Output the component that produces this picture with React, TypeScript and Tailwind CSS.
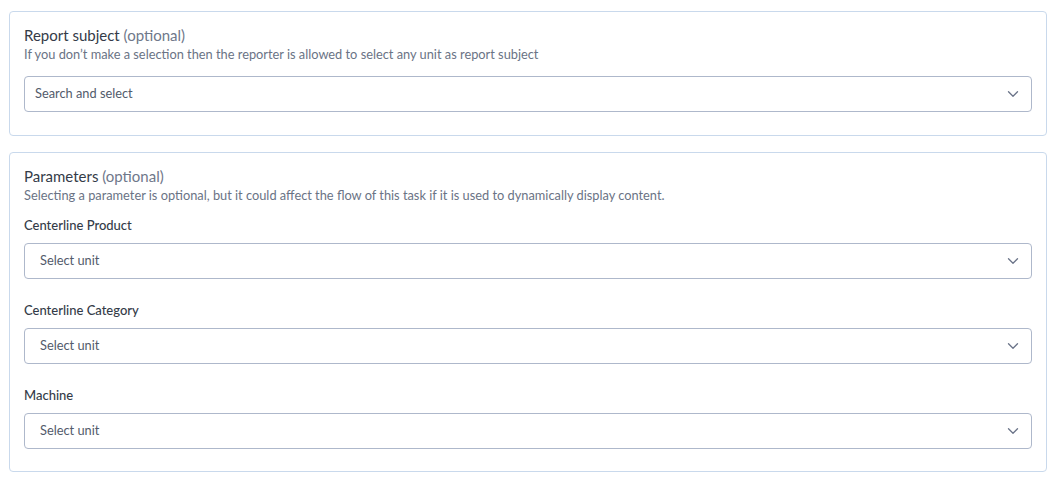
import React from 'react';

const Chevron = () => (
  <svg width="12" height="8" viewBox="0 0 12 8" fill="none" className="shrink-0">
    <path d="M1.5 1.75L6 6.25L10.5 1.75" stroke="#6b7489" strokeWidth="1.3" strokeLinecap="round" strokeLinejoin="round" />
  </svg>
);

const SelectBox = ({ placeholder, inset }: { placeholder: string; inset: string }) => (
  <div className={`h-9 w-full rounded-[4px] border border-[#aeb8cb] bg-white flex items-center justify-between pr-[12px] ${inset}`}>
    <span className="text-[12.8px] text-[#525b6b]">{placeholder}</span>
    <Chevron />
  </div>
);

const Heading = ({ title, hint }: { title: string; hint: string }) => (
  <div>
    <h2 className="text-[15px] leading-5 text-[#343b48]">
      {title} <span className="text-[#6f788a]">(optional)</span>
    </h2>
    <p className="text-[12.8px] leading-[18px] text-[#6a7385]">{hint}</p>
  </div>
);

const params = ['Centerline Product', 'Centerline Category', 'Machine'];

export default function App() {
  return (
    <div
      className="min-h-screen bg-white pl-[9px] pr-[14px] pt-[11px] flex flex-col gap-4"
      style={{ fontFamily: 'Lato, "Noto Sans", sans-serif' }}
    >
      <section className="rounded-[4px] border border-[#c9d9ec] pl-[14px] pr-[14px] pt-[13px] pb-[23px]">
        <Heading
          title="Report subject"
          hint="If you don’t make a selection then the reporter is allowed to select any unit as report subject"
        />
        <div className="mt-[13px]">
          <SelectBox placeholder="Search and select" inset="pl-[10px]" />
        </div>
      </section>

      <section className="rounded-[4px] border border-[#c9d9ec] pl-[14px] pr-[14px] pt-[13px] pb-[22px]">
        <Heading
          title="Parameters"
          hint="Selecting a parameter is optional, but it could affect the flow of this task if it is used to dynamically display content."
        />
        <div className="mt-[11px] flex flex-col gap-[21px]">
          {params.map((p) => (
            <div key={p} className="flex flex-col gap-2">
              <label className="text-[13px] leading-5 font-medium text-[#343b48]">{p}</label>
              <SelectBox placeholder="Select unit" inset="pl-[15px]" />
            </div>
          ))}
        </div>
      </section>
    </div>
  );
}
